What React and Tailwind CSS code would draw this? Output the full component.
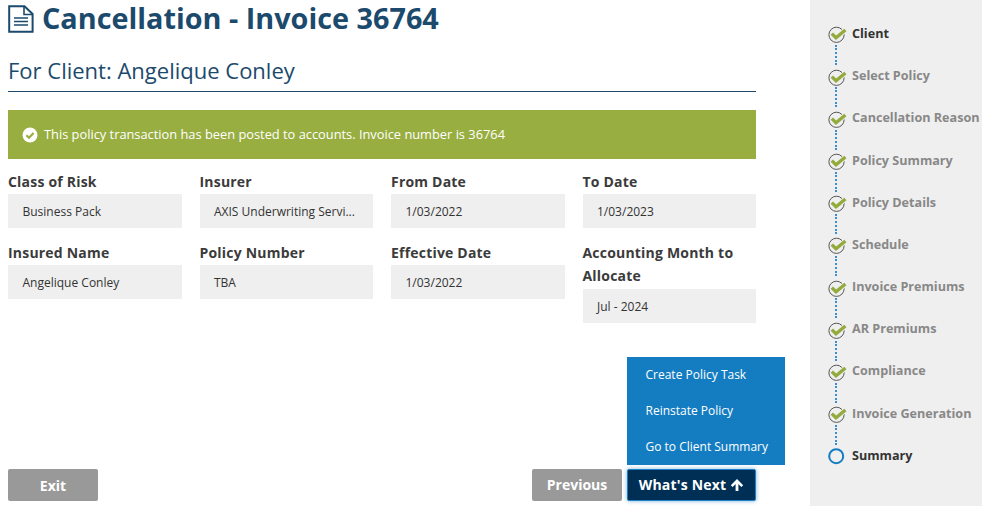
import React from "react";

const fields = [
  [
    { label: "Class of Risk", value: "Business Pack" },
    { label: "Insurer", value: "AXIS Underwriting Servi..." },
    { label: "From Date", value: "1/03/2022" },
    { label: "To Date", value: "1/03/2023" },
  ],
  [
    { label: "Insured Name", value: "Angelique Conley" },
    { label: "Policy Number", value: "TBA" },
    { label: "Effective Date", value: "1/03/2022" },
    { label: "Accounting Month to Allocate", value: "Jul - 2024", tall: true },
  ],
];

const steps = [
  { name: "Client", dark: true },
  { name: "Select Policy" },
  { name: "Cancellation Reason" },
  { name: "Policy Summary" },
  { name: "Policy Details" },
  { name: "Schedule" },
  { name: "Invoice Premiums" },
  { name: "AR Premiums" },
  { name: "Compliance" },
  { name: "Invoice Generation" },
  { name: "Summary", dark: true, current: true },
];

function DocIcon() {
  return (
    <svg width="26" height="28" viewBox="0 0 26 28" fill="none" stroke="#1b4a6d" className="shrink-0 mt-[5px]">
      <path d="M1.2 1.2H16.5L24.6 9V26.8H1.2Z" strokeWidth="2" />
      <path d="M16 1.5V9.5H24" strokeWidth="1.6" />
      <path d="M6 13H20M6 16.5H20M6 20H20" strokeWidth="1.5" />
    </svg>
  );
}

function StepCheck() {
  return (
    <svg width="18" height="18" viewBox="0 0 18 18" fill="none" className="shrink-0 overflow-visible">
      <circle cx="8.5" cy="9.8" r="7.6" stroke="#555" strokeWidth="1" />
      <path d="M3.8 8.6L8 12.8L17.4 5" stroke="#efefef" strokeWidth="5" />
      <path d="M3.8 8.6L8 12.8L17.4 5" stroke="#93aa3c" strokeWidth="3.4" />
    </svg>
  );
}

function StepCurrent() {
  return (
    <svg width="18" height="18" viewBox="0 0 18 18" fill="none" className="shrink-0">
      <circle cx="8.2" cy="9.2" r="7" stroke="#147dc2" strokeWidth="2" />
    </svg>
  );
}

function Field({ label, value, tall }) {
  return (
    <div className="flex flex-col">
      <div className={`text-[14px] leading-[23px] font-bold text-[#3b3b3b] tracking-[0.2px] ${tall ? "mb-[2px]" : "mb-[1px]"}`}>
        {label}
      </div>
      <div className="h-[34px] bg-[#efefef] flex items-center pt-[1px] pl-[14.5px] pr-2 text-[12px] text-[#333]">
        <span className="whitespace-nowrap">{value}</span>
      </div>
    </div>
  );
}

export default function App() {
  return (
    <div className="flex h-[506px] w-[982px] overflow-hidden bg-white font-['Open_Sans',sans-serif]">
      <main className="w-[810px] shrink-0 pl-2 pr-[54px] flex flex-col">
        <div className="flex items-start gap-[8px] h-[36px]">
          <DocIcon />
          <h1 className="text-[28.8px] leading-[36px] font-bold text-[#1b4a6d]">Cancellation - Invoice 36764</h1>
        </div>
        <h2 className="mt-[16px] text-[22px] leading-[36px] text-[#1b4a6d] border-b border-[#1b4a6d] h-[40px]">
          For Client: Angelique Conley
        </h2>
        <div className="mt-[18px] h-[49px] bg-[#98ae41] flex items-center pl-[14px] gap-[6px] text-[12.83px] text-white">
          <svg width="16" height="16" viewBox="0 0 16 16" className="shrink-0">
            <circle cx="8" cy="8" r="7.5" fill="#fff" />
            <path d="M4.4 8.2L7 10.8L11.6 6" fill="none" stroke="#98ae41" strokeWidth="2.2" />
          </svg>
          <span>This policy transaction has been posted to accounts. Invoice number is 36764</span>
        </div>
        <div className="mt-[11px] flex flex-col gap-[13px]">
          {fields.map((row, i) => (
            <div key={i} className="grid grid-cols-4 gap-x-[18px] items-start">
              {row.map((f) => (
                <Field key={f.label} label={f.label} value={f.value} tall={f.tall} />
              ))}
            </div>
          ))}
        </div>
        <div className="mt-auto mb-[5px] h-[32px] flex items-stretch justify-between">
          <button className="w-[90px] rounded-[2px] bg-[#999999] text-white text-[14px] font-bold">Exit</button>
          <div className="flex gap-[5px] relative">
            <button className="w-[90px] rounded-[2px] bg-[#999999] text-white text-[14px] font-bold pb-[1px]">Previous</button>
            <button className="w-[129px] rounded-[2px] bg-[#002f56] text-white text-[14px] font-bold border border-[#1d7fc4] shadow-[0_0_4px_rgba(29,127,196,0.6)] flex items-center justify-center gap-[4px] tracking-[0.2px] pb-[2px]">
              What's Next
              <svg width="14" height="14" viewBox="0 0 14 14" fill="#fff" className="mt-[1px]">
                <path d="M7 1L13.2 7.2L11.3 9L8.4 6.1V13H5.6V6.1L2.7 9L0.8 7.2Z" />
              </svg>
            </button>
            <div className="absolute left-[95px] bottom-[36px] w-[158px] h-[108px] bg-[#147dc2] text-white text-[12px] flex flex-col pl-[18.5px]">
              <div className="h-[36px] flex items-center">Create Policy Task</div>
              <div className="h-[36px] flex items-center">Reinstate Policy</div>
              <div className="h-[36px] flex items-center">Go to Client Summary</div>
            </div>
          </div>
        </div>
      </main>
      <aside className="flex-1 bg-[#efefef] pl-[18px] pt-[13.3px]">
        {steps.map((s, i) => (
          <div key={s.name} className="relative h-[42.2px] flex items-center gap-[6px]">
            {s.current ? <StepCurrent /> : <StepCheck />}
            <span className={`text-[12.6px] font-bold whitespace-nowrap ${s.dark ? "text-[#333]" : "text-[#888]"}`}>{s.name}</span>
            {i < steps.length - 1 && (
              <div className="absolute left-[7px] top-[32px] h-[20px] border-l-2 border-dotted border-[#3a8fcf]" />
            )}
          </div>
        ))}
      </aside>
    </div>
  );
}
